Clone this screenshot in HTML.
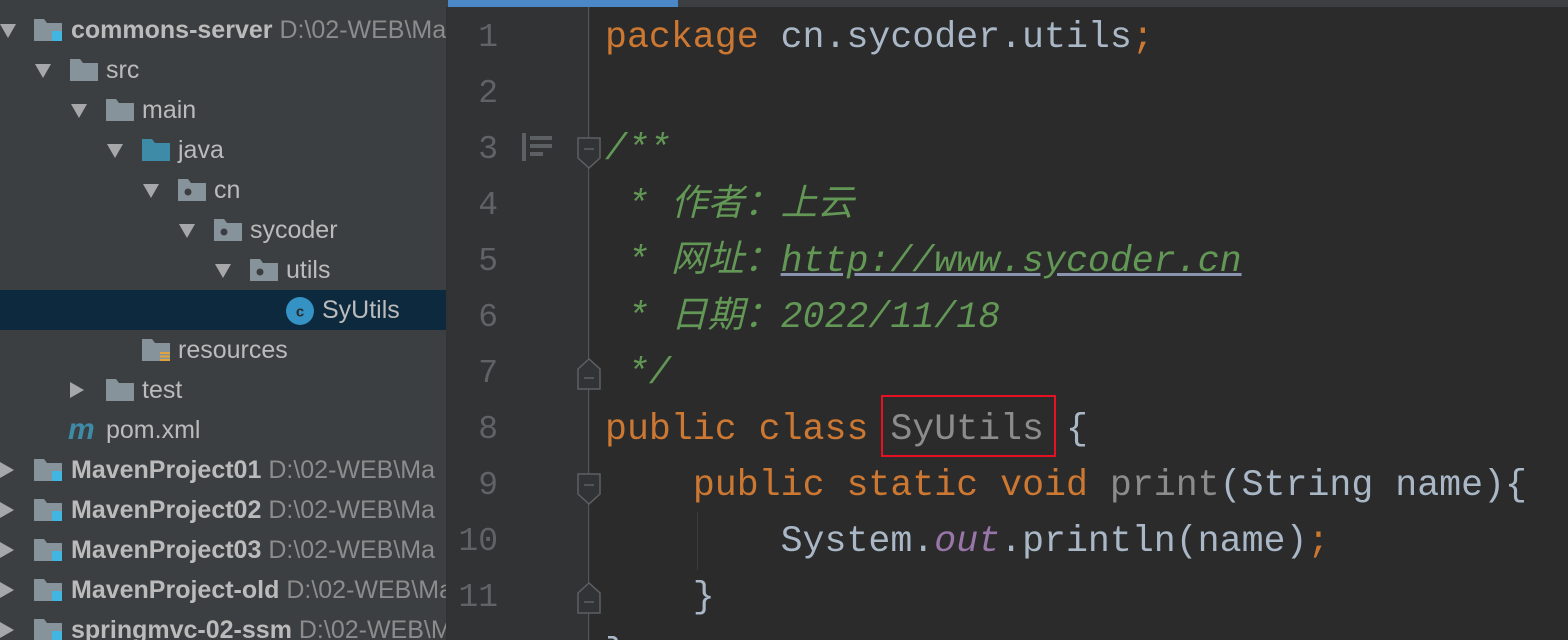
<!DOCTYPE html><html><head><meta charset="utf-8"><style>
*{margin:0;padding:0;box-sizing:border-box}
html{width:1568px;height:640px;overflow:hidden}
body{width:1568px;height:640px;overflow:hidden;background:#2b2b2b;position:relative;font-family:"Liberation Sans","Noto Sans CJK SC",sans-serif}
#left{position:absolute;left:0;top:0;width:446px;height:640px;background:#3c3f41;overflow:hidden}
.row{position:absolute;left:0;width:446px;height:40px;line-height:40px;font-size:25px;color:#bbbbbb;white-space:nowrap}
.row .t{position:absolute;top:0}
.b{font-weight:bold}
.p{color:#8c8c8c}
.ar{position:absolute;width:0;height:0}
.dn{border-left:8px solid transparent;border-right:8px solid transparent;border-top:14px solid #a5a7a9;top:14px}
.rt{border-top:8px solid transparent;border-bottom:8px solid transparent;border-left:14px solid #a5a7a9;top:12px}
.fd{position:absolute;top:9px;width:28px;height:22px}
#gut{position:absolute;left:448px;top:7px;width:142px;height:633px;background:#313335}
#tabs{position:absolute;left:446px;top:0;width:1122px;height:7px;background:#3c3f41}
.ln{position:absolute;left:448px;width:50px;text-align:right;font-family:"Liberation Mono",monospace;font-size:33px;color:#606366;height:56px;line-height:56px}
.cl{position:absolute;left:605px;font-family:"Liberation Mono","Noto Sans CJK SC",monospace;font-size:36.6px;height:56px;line-height:56px;white-space:pre;color:#a9b7c6}
.k{color:#cc7832}.c{color:#629755;font-style:italic}.g{color:#8c8c8c}.pu{color:#9876aa;font-style:italic}
</style></head><body>
<div id="left">
<div class="row" style="top:10px"><div class="ar dn" style="left:0"></div><svg class="fd" style="left:34px" viewBox="0 0 28 22"><path d="M0 0h10l3 4h15v18H0z" fill="#87939a"/><rect x="18" y="12" width="10" height="10" fill="#40b6e0"/></svg><span class="t b" style="left:71px">commons-server <span class="p" style="font-weight:normal">D:\02-WEB\Ma</span></span></div>
<div class="row" style="top:50px"><div class="ar dn" style="left:35px"></div><svg class="fd" style="left:70px" viewBox="0 0 28 22"><path d="M0 0h10l3 4h15v18H0z" fill="#87939a"/></svg><span class="t" style="left:106px">src</span></div>
<div class="row" style="top:90px"><div class="ar dn" style="left:71px"></div><svg class="fd" style="left:106px" viewBox="0 0 28 22"><path d="M0 0h10l3 4h15v18H0z" fill="#87939a"/></svg><span class="t" style="left:142px">main</span></div>
<div class="row" style="top:130px"><div class="ar dn" style="left:107px"></div><svg class="fd" style="left:142px" viewBox="0 0 28 22"><path d="M0 0h10l3 4h15v18H0z" fill="#3d8ba6"/></svg><span class="t" style="left:178px">java</span></div>
<div class="row" style="top:170px"><div class="ar dn" style="left:143px"></div><svg class="fd" style="left:178px" viewBox="0 0 28 22"><path d="M0 0h10l3 4h15v18H0z" fill="#87939a"/><circle cx="10" cy="13" r="3.5" fill="#3c3f41"/></svg><span class="t" style="left:214px">cn</span></div>
<div class="row" style="top:210px"><div class="ar dn" style="left:179px"></div><svg class="fd" style="left:214px" viewBox="0 0 28 22"><path d="M0 0h10l3 4h15v18H0z" fill="#87939a"/><circle cx="10" cy="13" r="3.5" fill="#3c3f41"/></svg><span class="t" style="left:250px">sycoder</span></div>
<div class="row" style="top:250px"><div class="ar dn" style="left:215px"></div><svg class="fd" style="left:250px" viewBox="0 0 28 22"><path d="M0 0h10l3 4h15v18H0z" fill="#87939a"/><circle cx="10" cy="13" r="3.5" fill="#3c3f41"/></svg><span class="t" style="left:286px">utils</span></div>
<div class="row" style="top:290px;background:#0d293e"><svg style="position:absolute;left:286px;top:7px" width="28" height="28" viewBox="0 0 28 28"><circle cx="14" cy="14" r="14" fill="#3592c4"/><text x="14" y="19.5" text-anchor="middle" font-family="Liberation Sans" font-weight="bold" font-size="15" fill="#2b2b2b">c</text></svg><span class="t" style="left:322px">SyUtils</span></div>
<div class="row" style="top:330px"><svg class="fd" style="left:142px" viewBox="0 0 28 22"><path d="M0 0h10l3 4h15v18H0z" fill="#87939a"/><g fill="#e0a33d"><rect x="18" y="13" width="12" height="2"/><rect x="18" y="16.5" width="12" height="2"/><rect x="18" y="20" width="12" height="2"/></g></svg><span class="t" style="left:178px">resources</span></div>
<div class="row" style="top:370px"><div class="ar rt" style="left:70px"></div><svg class="fd" style="left:106px" viewBox="0 0 28 22"><path d="M0 0h10l3 4h15v18H0z" fill="#87939a"/></svg><span class="t" style="left:142px">test</span></div>
<div class="row" style="top:410px"><span class="t" style="left:68px;color:#3d8ba6;font-weight:bold;font-style:italic;font-size:30px">m</span><span class="t" style="left:106px">pom.xml</span></div>
<div class="row" style="top:450px"><div class="ar rt" style="left:0"></div><svg class="fd" style="left:34px" viewBox="0 0 28 22"><path d="M0 0h10l3 4h15v18H0z" fill="#87939a"/><rect x="18" y="12" width="10" height="10" fill="#40b6e0"/></svg><span class="t b" style="left:71px">MavenProject01 <span class="p" style="font-weight:normal">D:\02-WEB\Ma</span></span></div>
<div class="row" style="top:490px"><div class="ar rt" style="left:0"></div><svg class="fd" style="left:34px" viewBox="0 0 28 22"><path d="M0 0h10l3 4h15v18H0z" fill="#87939a"/><rect x="18" y="12" width="10" height="10" fill="#40b6e0"/></svg><span class="t b" style="left:71px">MavenProject02 <span class="p" style="font-weight:normal">D:\02-WEB\Ma</span></span></div>
<div class="row" style="top:530px"><div class="ar rt" style="left:0"></div><svg class="fd" style="left:34px" viewBox="0 0 28 22"><path d="M0 0h10l3 4h15v18H0z" fill="#87939a"/><rect x="18" y="12" width="10" height="10" fill="#40b6e0"/></svg><span class="t b" style="left:71px">MavenProject03 <span class="p" style="font-weight:normal">D:\02-WEB\Ma</span></span></div>
<div class="row" style="top:570px"><div class="ar rt" style="left:0"></div><svg class="fd" style="left:34px" viewBox="0 0 28 22"><path d="M0 0h10l3 4h15v18H0z" fill="#87939a"/><rect x="18" y="12" width="10" height="10" fill="#40b6e0"/></svg><span class="t b" style="left:71px">MavenProject-old <span class="p" style="font-weight:normal">D:\02-WEB\Ma</span></span></div>
<div class="row" style="top:610px"><div class="ar rt" style="left:0"></div><svg class="fd" style="left:34px" viewBox="0 0 28 22"><path d="M0 0h10l3 4h15v18H0z" fill="#87939a"/><rect x="18" y="12" width="10" height="10" fill="#40b6e0"/></svg><span class="t b" style="left:71px">springmvc-02-ssm <span class="p" style="font-weight:normal">D:\02-WEB\Ma</span></span></div>
</div>
<div style="position:absolute;left:446px;top:0;width:2px;height:640px;background:#323232"></div>
<div id="tabs"></div>
<div style="position:absolute;left:448px;top:0;width:230px;height:7px;background:#4a88c7"></div>
<div id="gut"></div>
<div style="position:absolute;left:588px;top:7px;width:1px;height:633px;background:#555555"></div>
<div style="position:absolute;left:697px;top:512px;width:1px;height:58px;background:#3b3b3b"></div>
<svg style="position:absolute;left:576px;top:136px" width="26" height="34" viewBox="0 0 26 34"><path d="M2 2h22v20l-11 10l-11-10z" fill="#313335" stroke="#5d6063" stroke-width="1.5"/><path d="M8 13h10" stroke="#5d6063" stroke-width="1.5"/></svg>
<svg style="position:absolute;left:576px;top:357px" width="26" height="34" viewBox="0 0 26 34"><path d="M2 12l11-10l11 10v20h-22z" fill="#313335" stroke="#5d6063" stroke-width="1.5"/><path d="M8 21h10" stroke="#5d6063" stroke-width="1.5"/></svg>
<svg style="position:absolute;left:576px;top:472px" width="26" height="34" viewBox="0 0 26 34"><path d="M2 2h22v20l-11 10l-11-10z" fill="#313335" stroke="#5d6063" stroke-width="1.5"/><path d="M8 13h10" stroke="#5d6063" stroke-width="1.5"/></svg>
<svg style="position:absolute;left:576px;top:581px" width="26" height="34" viewBox="0 0 26 34"><path d="M2 12l11-10l11 10v20h-22z" fill="#313335" stroke="#5d6063" stroke-width="1.5"/><path d="M8 21h10" stroke="#5d6063" stroke-width="1.5"/></svg>
<svg style="position:absolute;left:521px;top:133px" width="34" height="28" viewBox="0 0 34 28"><g fill="#5d6063"><rect x="1" y="0" width="4" height="28"/><rect x="9" y="3" width="22" height="4"/><rect x="9" y="11" width="22" height="4"/><rect x="9" y="19" width="13" height="4"/></g></svg>
<div class="ln" style="top:10px">1</div><div class="ln" style="top:66px">2</div><div class="ln" style="top:122px">3</div><div class="ln" style="top:178px">4</div><div class="ln" style="top:234px">5</div><div class="ln" style="top:290px">6</div><div class="ln" style="top:346px">7</div><div class="ln" style="top:402px">8</div><div class="ln" style="top:458px">9</div><div class="ln" style="top:514px">10</div><div class="ln" style="top:570px">11</div>
<div class="cl" style="top:10px"><span class="k">package</span> cn.sycoder.utils<span class="k">;</span></div>
<div class="cl" style="top:122px"><span class="c">/**</span></div>
<div class="cl" style="top:178px"><span class="c"> * 作者：上云</span></div>
<div class="cl" style="top:234px"><span class="c"> * 网址：<span style="text-decoration:underline;text-decoration-color:#8a94b0">http://www.sycoder.cn</span></span></div>
<div class="cl" style="top:290px"><span class="c"> * 日期：2022/11/18</span></div>
<div class="cl" style="top:346px"><span class="c"> */</span></div>
<div class="cl" style="top:402px"><span class="k">public class</span> <span class="g">SyUtils</span> {</div>
<div class="cl" style="top:458px">    <span class="k">public static void</span> <span class="g">print</span>(String name){</div>
<div class="cl" style="top:514px">        System.<span class="pu">out</span>.println(name)<span class="k">;</span></div>
<div class="cl" style="top:570px">    }</div>
<div class="cl" style="top:626px;height:14px;overflow:hidden">}</div>
<div style="position:absolute;left:881px;top:395px;width:175px;height:62px;border:2.5px solid #e81123"></div>
</body></html>
